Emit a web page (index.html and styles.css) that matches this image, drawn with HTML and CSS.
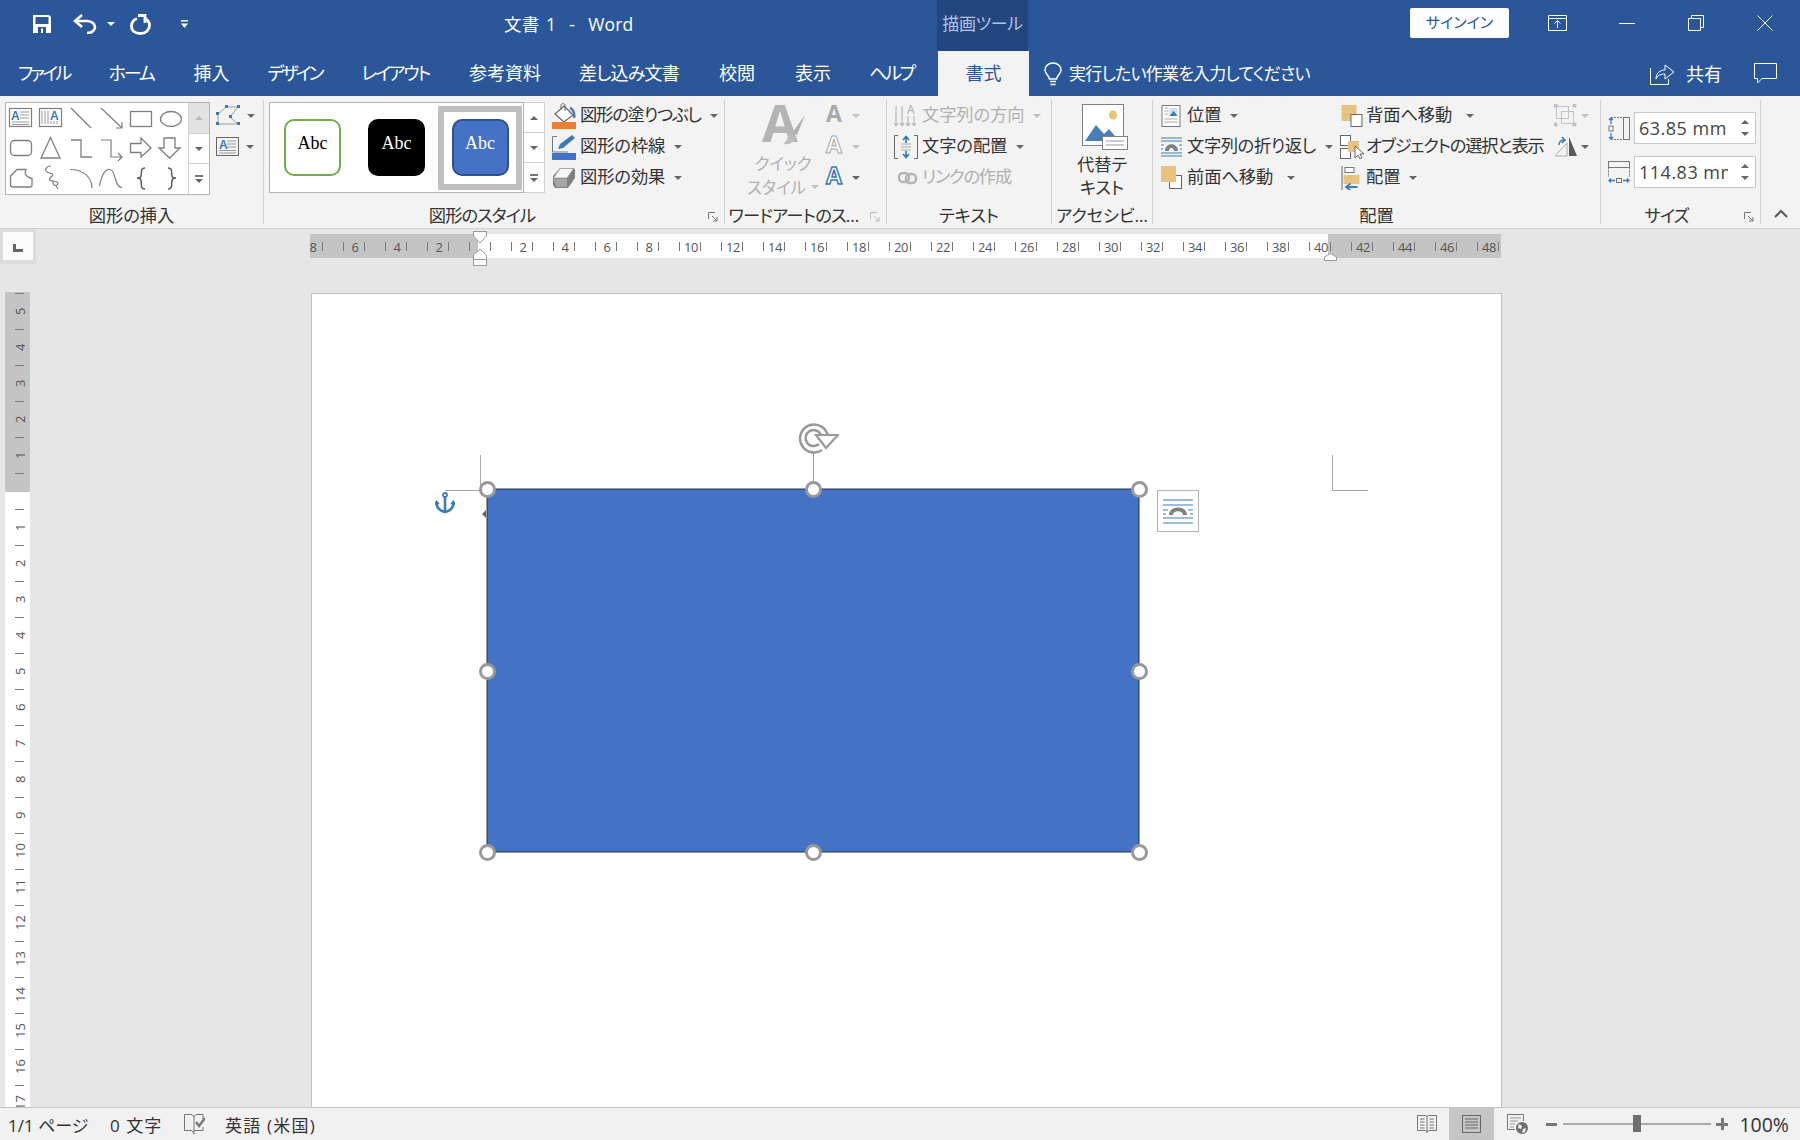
FILE: index.html
```html
<!DOCTYPE html>
<html lang="ja">
<head>
    <meta charset="UTF-8">
    <title>文書 1 - Word</title>
    <link rel="stylesheet" href="styles.css">
</head>
<body>
    <!-- title bar -->
    <header class="titlebar">
        <div class="qat">
            <svg class="qat-save" width="20" height="20" viewBox="0 0 20 20"><path d="M1 1H17L19 3V19H1Z" fill="#fff"/><rect x="3.500" y="3" width="13" height="7" fill="#2b579a"/><rect x="6" y="13" width="8" height="6" fill="#2b579a"/><rect x="9" y="14.500" width="2" height="4.500" fill="#fff"/></svg>
            <svg class="qat-undo" width="24" height="20" viewBox="0 0 24 20"><path d="M3 7H14C20 7 22 11 22 13C22 16 19 19 14 19" fill="none" stroke="#fff" stroke-width="2.600"/><path d="M9 1L2 7L9 13" fill="none" stroke="#fff" stroke-width="2.600"/></svg>
            <i class="caret caret-white qat-caret1"></i>
            <svg class="qat-redo" width="21" height="21" viewBox="0 0 21 21"><path d="M7 4.500C3 6 1.500 9 1.500 12C1.500 17 5.500 19.500 10.500 19.500C15.500 19.500 19.500 16 19.500 11.500C19.500 8 17.500 5.500 14 4" fill="none" stroke="#fff" stroke-width="2.800"/><path d="M15 0V9M8 1.500H15" fill="none" stroke="#fff" stroke-width="2.800"/></svg>
            <svg class="qat-more" width="9" height="9" viewBox="0 0 9 9"><rect x="1" width="7" height="1.500" fill="#fff"/><path d="M1 3.500H8L4.500 8Z" fill="#fff"/></svg>
        </div>
        <div class="doc-title">文書 1&nbsp;&nbsp;-&nbsp;&nbsp;Word</div>
        <div class="context-tab">描画ツール</div>
        <div class="signin">サインイン</div>
        <div class="winbtn"><svg width="19" height="16" viewBox="0 0 19 16"><path d="M.5.500H18.500V15.500H.5ZM.5 3.500H18.500M9.500 13V6M6.500 8.500L9.500 5.500L12.500 8.500" fill="none" stroke="#fff"/></svg></div>
        <div class="winbtn"><svg width="16" height="16" viewBox="0 0 16 16"><path d="M0 8.500H16" stroke="#fff"/></svg></div>
        <div class="winbtn"><svg width="16" height="16" viewBox="0 0 16 16"><path d="M.5 3.500H12.500V15.500H.5ZM3.500 3.500V.5H15.500V12.500H12.500" fill="none" stroke="#fff"/></svg></div>
        <div class="winbtn"><svg width="16" height="16" viewBox="0 0 16 16"><path d="M.5.500L15.500 15.500M15.500.500L.5 15.500" stroke="#fff"/></svg></div>
    </header>

    <!-- tabs -->
    <nav class="tabs">
        <span class="tab tab-kana tab-file">ファイル</span>
        <span class="tab tab-kana">ホーム</span>
        <span class="tab">挿入</span>
        <span class="tab tab-kana tab-design">デザイン</span>
        <span class="tab tab-kana">レイアウト</span>
        <span class="tab">参考資料</span>
        <span class="tab tab-mixed">差し込み文書</span>
        <span class="tab tab-wide">校閲</span>
        <span class="tab">表示</span>
        <span class="tab tab-kana">ヘルプ</span>
        <span class="tab-active">書式</span>
        <svg class="bulb" width="18" height="24" viewBox="0 0 18 24"><path d="M5.500 17C5 13 1 12 1 8C1 4 4.500 1 9 1C13.500 1 17 4 17 8C17 12 13 13 12.500 17Z" fill="none" stroke="#fff" stroke-width="1.500"/><path d="M6 19.500H12M6.500 22.500H11.500" stroke="#fff" stroke-width="1.500"/></svg>
        <span class="tell-me">実行したい作業を入力してください</span>
        <svg class="share-icon" width="25" height="23" viewBox="0 0 25 23"><path d="M.5 6V22.500H18.500V17" fill="none" stroke="#fff"/><path d="M6 17C6 11 10 8 15 8V3L24 10L15 17V12C11 12 8 13 6 17Z" fill="none" stroke="#fff"/></svg>
        <span class="share-text">共有</span>
        <svg class="comment-icon" width="23" height="21" viewBox="0 0 23 21"><path d="M.5.500H22.500V15.500H8L3.500 20V15.500H.5Z" fill="none" stroke="#fff"/></svg>
    </nav>

    <!-- ribbon -->
    <section class="ribbon">
        <div class="group g-insert">
            <div class="group-body">
                <div class="shape-gallery">
                    <svg class="shape-grid" width="182" height="91" viewBox="0 0 182 91" fill="none" stroke="#7f7f7f">
                        <rect x="3.500" y="5.500" width="22" height="18" stroke-width="1.200"/>
                        <text x="5" y="17" class="gal-a">A</text>
                        <path d="M14 9H23M14 12H23M14 15H23M6 19H23M6 21.500H23" stroke="#999"/>
                        <rect x="33.500" y="5.500" width="22" height="18" stroke-width="1.200"/>
                        <text x="44" y="17" class="gal-a">A</text>
                        <path d="M36 8V21M39 8V21M42 8V21M45 18V21M48 18V21M51 18V21" stroke="#999"/>
                        <path d="M65 5L85 25" stroke-width="1.200"/>
                        <path d="M95 5L116 25M116 19V25H110" stroke-width="1.200"/>
                        <rect x="124.500" y="8.500" width="21" height="15" stroke-width="1.300"/>
                        <ellipse cx="165" cy="16" rx="10.500" ry="7.500" stroke-width="1.300"/>
                        <rect x="4.500" y="37.500" width="21" height="15" rx="4" stroke-width="1.300"/>
                        <path d="M44.500 34.500L35 55H54Z" stroke-width="1.300"/>
                        <path d="M65 37H75V54H86" stroke-width="1.300"/>
                        <path d="M95 37H105V54H116M112 50L116 54L112 58" stroke-width="1.200"/>
                        <path d="M124.500 40.500H135V35L145 45L135 54V49.500H124.500Z" stroke-width="1.300"/>
                        <path d="M158 35H169V45H174L163.500 55L153 45H158Z" stroke-width="1.300"/>
                        <path d="M4.500 73L11 66.500H20C18 71 20 74 26 75.500V82Q26 84 24 84H7Q4.500 84 4.500 82Z" stroke-width="1.300"/>
                        <path d="M45 63C40 63 38 68 41 69C46 71 48 71 46 73C42 76 43 78 47 78C52 78 53 81 51 82C47 84 46 79 48 78M50 83L52 86" stroke-width="1.200"/>
                        <path d="M64 66.500C77 66.500 86 74 86 85" stroke-width="1.200"/>
                        <path d="M93.500 83C96 70 100 66 104 66.500C110 67 108 84 116 84.500" stroke-width="1.200"/>
                        <path d="M139 65C134 65 136 69 135 73C135 75 133 75 131 75C133 75 135 75 135 78C136 82 134 86 139 86" stroke="#555" stroke-width="1.400"/>
                        <path d="M162 65C167 65 165 69 166 73C166 75 168 75 170 75C168 75 166 75 166 78C165 82 167 86 162 86" stroke="#555" stroke-width="1.400"/>
                    </svg>
                    <div class="gal-scroll">
                        <span class="gal-btn gal-btn-off"><i class="tri-up tri-light"></i></span>
                        <span class="gal-btn"><i class="caret"></i></span>
                        <span class="gal-btn gal-more"><i class="more-bar"></i><i class="caret"></i></span>
                    </div>
                </div>
                <div class="shape-tools">
                    <div class="tool-row">
                        <svg width="25" height="21" viewBox="0 0 25 21" fill="none"><path d="M2 9V19H22L14 12L22 2H10Z" stroke="#999"/><path d="M0 7h3v3H0zM9 0h3v3H9zM21 0h3v3h-3zM13 10h3v3h-3zM21 17h3v3h-3zM0 17h3v3H0z" fill="#3e73b5"/></svg>
                        <i class="caret"></i>
                    </div>
                    <div class="tool-row">
                        <svg width="24" height="20" viewBox="0 0 24 20" fill="none"><rect x=".5" y=".5" width="22" height="18" stroke="#666"/><text x="3" y="12" class="gal-a">A</text><path d="M11 4H20M11 7H20M11 10H20M3 13.500H20M3 16H20" stroke="#999"/></svg>
                        <i class="caret"></i>
                    </div>
                </div>
            </div>
            <div class="group-label">図形の挿入</div>
        </div>

        <div class="group g-styles">
            <div class="group-body">
                <div class="style-gallery">
                    <div class="style-list">
                        <div class="style-cell"><span class="abc abc-green">Abc</span></div>
                        <div class="style-cell"><span class="abc abc-black">Abc</span></div>
                        <div class="style-cell style-cell-sel"><span class="abc abc-blue">Abc</span></div>
                    </div>
                    <div class="gal-scroll style-scroll">
                        <span class="gal-btn"><i class="tri-up"></i></span>
                        <span class="gal-btn"><i class="caret"></i></span>
                        <span class="gal-btn gal-more"><i class="more-bar"></i><i class="caret"></i></span>
                    </div>
                </div>
                <div class="commands cmd-fill">
                    <div class="cmd">
                        <svg class="cmd-icon" width="24" height="26" viewBox="0 0 24 26" fill="none"><path d="M12 3L21 12L12 19L3 11Z" fill="#fff" stroke="#666" stroke-width="1.200"/><path d="M9 7V2.500C9 0 13 0 13 2.500V8" stroke="#666"/><path d="M18 5C21 6 23 10 22 15" stroke="#4a7ebb" stroke-width="2.500"/><rect y="19" width="24" height="7" fill="#ed7d31"/></svg>
                        <span class="tight">図形の塗りつぶし</span><i class="caret"></i>
                    </div>
                    <div class="cmd">
                        <svg class="cmd-icon" width="24" height="26" viewBox="0 0 24 26" fill="none"><path d="M5 2.500H.5V18H16" stroke="#777"/><path d="M6 15L8 10L20 1L23 4L11 14Z" fill="#3e7ab8"/><rect y="19" width="24" height="7" fill="#4472c4"/></svg>
                        <span>図形の枠線</span><i class="caret"></i>
                    </div>
                    <div class="cmd">
                        <svg class="cmd-icon" width="24" height="24" viewBox="0 0 24 24"><path d="M8 2H22L23 4V12L16 22H3L1 19V10Z" fill="#7f7f7f"/><path d="M8 2.500H21.500L15 12H1.500Z" fill="#f7f7f7" stroke="#aaa"/><path d="M1.500 13H15V21H4Z" fill="#a6a6a6"/></svg>
                        <span>図形の効果</span><i class="caret"></i>
                    </div>
                </div>
            </div>
            <div class="group-label label-launch">図形のスタイル<svg class="launcher" width="10" height="10" viewBox="0 0 10 10"><path d="M.5 7V.5H7M4 4L9 9M9 5V9H5" fill="none" stroke="#777"/></svg></div>
        </div>

        <div class="group g-wordart">
            <div class="group-body">
                <div class="quick-style">
                    <svg width="44" height="43" viewBox="0 0 44 43"><text x="0" y="38" class="big-a">A</text><path d="M43 11L35 31L30 29Z" fill="#b0b0b0"/><path d="M28 30L33 33C33 38 28 41 21 40C25 38 25 33 28 30Z" fill="#bdbdbd"/></svg>
                    <div class="quick-text">クイック</div>
                    <div class="quick-text">スタイル<i class="caret caret-light"></i></div>
                </div>
                <div class="commands cmd-art">
                    <div class="cmd"><span class="art-a art-fill">A</span><i class="caret caret-light"></i></div>
                    <div class="cmd"><span class="art-a art-line">A</span><i class="caret caret-light"></i></div>
                    <div class="cmd"><span class="art-a art-blue">A</span><i class="caret"></i></div>
                </div>
            </div>
            <div class="group-label label-launch">ワードアートのス…<svg class="launcher launcher-off" width="10" height="10" viewBox="0 0 10 10"><path d="M.5 7V.5H7M4 4L9 9M9 5V9H5" fill="none" stroke="#bbb"/></svg></div>
        </div>

        <div class="group g-text">
            <div class="group-body">
                <div class="commands cmd-text">
                    <div class="cmd cmd-off">
                        <svg class="cmd-icon" width="24" height="24" viewBox="0 0 24 24" fill="none" stroke="#aaa"><path d="M2 2V21M8 2V21M14 12V21M20 12V21M0 19L2 22L4 19M6 19L8 22L10 19M12 19L14 22L16 19M18 19L20 22L22 19"/><text x="13" y="10" class="art-mini">A</text></svg>
                        <span>文字列の方向</span><i class="caret caret-light"></i>
                    </div>
                    <div class="cmd">
                        <svg class="cmd-icon" width="24" height="24" viewBox="0 0 24 24" fill="none"><path d="M4 .5H.5V23.500H4M20 .5H23.500V23.500H20" stroke="#666"/><path d="M7 9H17M7 12H17M7 15H17" stroke="#aaa"/><path d="M12 8V2M9 5L12 1.500L15 5M12 16V22M9 19L12 22.500L15 19" stroke="#2e75b6" stroke-width="1.600"/></svg>
                        <span>文字の配置</span><i class="caret"></i>
                    </div>
                    <div class="cmd cmd-off">
                        <svg class="cmd-icon link-icon" width="22" height="14" viewBox="0 0 22 14" fill="none" stroke="#b5b5b5" stroke-width="2.500"><rect x="2" y="2" width="10" height="9" rx="4"/><rect x="9" y="3" width="10" height="9" rx="4"/></svg>
                        <span class="tight">リンクの作成</span>
                    </div>
                </div>
            </div>
            <div class="group-label">テキスト</div>
        </div>

        <div class="group g-alt">
            <div class="group-body">
                <div class="alt-text">
                    <svg width="47" height="47" viewBox="0 0 47 47"><rect x=".5" y=".5" width="41" height="41" fill="#fff" stroke="#808080"/><ellipse cx="31" cy="11" rx="4" ry="4.500" fill="#e9c46a"/><path d="M3 37L14 21L22 30L27 25L37 37Z" fill="#4a7ebb"/><rect x="20.500" y="32.500" width="25" height="13" fill="#fff" stroke="#808080"/><path d="M24 37H42M24 41H42" stroke="#999"/></svg>
                    <div class="alt-line">代替テ</div>
                    <div class="alt-line">キスト</div>
                </div>
            </div>
            <div class="group-label">アクセシビ…</div>
        </div>

        <div class="group g-arrange">
            <div class="group-body">
                <div class="commands arr-col1">
                    <div class="cmd">
                        <svg class="cmd-icon" width="20" height="22" viewBox="0 0 20 22" fill="none"><rect x=".5" y=".5" width="18" height="21" fill="#fff" stroke="#777"/><path d="M3 3H7M3 6H7M3 9H7M3 14H16M3 17H16" stroke="#aaa"/><rect x="8" y="3" width="8" height="8" fill="#cfe0f2"/><path d="M8 11L12 6L16 11Z" fill="#3e7ab8"/></svg>
                        <span>位置</span><i class="caret"></i>
                    </div>
                    <div class="cmd">
                        <svg class="cmd-icon" width="21" height="20" viewBox="0 0 21 20" fill="none"><path d="M0 1H21M0 4H21M0 16H21M0 19H21" stroke="#3e7ab8" stroke-width="1.200"/><path d="M0 8H3M18 8H21M0 12H2M19 12H21" stroke="#3e7ab8"/><path d="M4 14C4 5 17 5 17 14H13C13 10 8 10 8 14Z" fill="#808080"/></svg>
                        <span class="tight-sm">文字列の折り返し</span><i class="caret"></i>
                    </div>
                    <div class="cmd">
                        <svg class="cmd-icon" width="21" height="23" viewBox="0 0 21 23" fill="none"><rect x="8.500" y="9.500" width="12" height="13" fill="#fff" stroke="#666"/><rect width="15" height="16" fill="#e8c27e"/></svg>
                        <span>前面へ移動</span><i class="caret caret-far"></i>
                    </div>
                </div>
                <div class="commands arr-col2">
                    <div class="cmd">
                        <svg class="cmd-icon" width="21" height="22" viewBox="0 0 21 22" fill="none"><rect width="15" height="16" fill="#e8c27e"/><rect x="9.500" y="9.500" width="11" height="12" fill="#fff" stroke="#666"/></svg>
                        <span>背面へ移動</span><i class="caret caret-far"></i>
                    </div>
                    <div class="cmd">
                        <svg class="cmd-icon" width="24" height="24" viewBox="0 0 24 24" fill="none"><rect x=".5" y=".5" width="10" height="10" fill="#fff" stroke="#666"/><rect x=".5" y="13.500" width="10" height="10" fill="#fff" stroke="#666"/><rect x="8" y="6" width="11" height="11" fill="#e8c27e"/><path d="M15 11V23L18 20L20 24L22 23L20 19H24Z" fill="#fff" stroke="#666"/></svg>
                        <span class="tight-md">オブジェクトの選択と表示</span>
                    </div>
                    <div class="cmd">
                        <svg class="cmd-icon" width="21" height="24" viewBox="0 0 21 24" fill="none"><path d="M.5 0V24" stroke="#666"/><rect x="3.500" y="1.500" width="9" height="5" fill="#fff" stroke="#777"/><rect x="2" y="9" width="16" height="9" fill="#e8c27e"/><path d="M16 21H5M9 17.500L4.500 21L9 24.500" stroke="#3e7ab8" stroke-width="1.800"/></svg>
                        <span>配置</span><i class="caret"></i>
                    </div>
                </div>
                <div class="commands arr-col3">
                    <div class="cmd">
                        <svg class="cmd-icon" width="23" height="23" viewBox="0 0 23 23" fill="none" stroke="#c4c0c8"><rect x="2.500" y="2.500" width="12" height="12"/><rect x="7.500" y="7.500" width="12" height="12"/><path d="M0 0h3v3H0zM19 0h3v3h-3zM0 19h3v3H0zM19 19h3v3h-3z" fill="#c4c0c8"/></svg>
                        <i class="caret caret-light"></i>
                    </div>
                    <div class="cmd">
                        <svg class="cmd-icon" width="23" height="21" viewBox="0 0 23 21" fill="none"><path d="M1 20L13 7V20Z" stroke="#aaa"/><path d="M15 1L23 20H15Z" fill="#595959"/><path d="M5 9C5 5 8 4 11 4M8 1L11 4L8 7" stroke="#3e7ab8" stroke-width="1.500"/></svg>
                        <i class="caret"></i>
                    </div>
                </div>
            </div>
            <div class="group-label">配置</div>
        </div>

        <div class="group g-size">
            <div class="group-body size-body">
                <div class="size-row">
                    <svg width="22" height="23" viewBox="0 0 22 23" fill="none"><path d="M3 .5H15.500M3 22.500H15.500M15.500.5V22.500" stroke="#777" stroke-dasharray="2 1"/><rect x="15.500" y=".5" width="6" height="22" stroke="#777"/><rect x="1" y="9" width="4" height="5" stroke="#777"/><path d="M3 7V1M1 3L3 1L5 3M3 16V22M1 20L3 22L5 20" stroke="#3e7ab8" stroke-width="1.300"/></svg>
                    <div class="spin-input"><span class="spin-value">63.85 mm</span><span class="spin-arrows"><i class="tri-up"></i><i class="caret"></i></span></div>
                </div>
                <div class="size-row">
                    <svg width="22" height="23" viewBox="0 0 22 23" fill="none"><rect x=".5" y=".5" width="21" height="6" stroke="#777"/><path d="M.5 6.500V16M21.500 6.500V16" stroke="#777" stroke-dasharray="2 1"/><rect x="8.500" y="17.500" width="5" height="4" stroke="#777"/><path d="M1 19.500H7M3 17.500L1 19.500L3 21.500M15 19.500H21M19 17.500L21 19.500L19 21.500" stroke="#3e7ab8" stroke-width="1.300"/></svg>
                    <div class="spin-input"><span class="spin-value">114.83 mm</span><span class="spin-arrows"><i class="tri-up"></i><i class="caret"></i></span></div>
                </div>
            </div>
            <div class="group-label label-launch label-size">サイズ<svg class="launcher" width="10" height="10" viewBox="0 0 10 10"><path d="M.5 7V.5H7M4 4L9 9M9 5V9H5" fill="none" stroke="#777"/></svg></div>
        </div>
        <svg class="collapse" width="14" height="9" viewBox="0 0 14 9"><path d="M1 8L7 2L13 8" fill="none" stroke="#595959" stroke-width="2"/></svg>
    </section>

    <!-- document area -->
    <main class="workspace">
        <div class="left-col">
            <div class="tab-stop"><span class="tab-stop-inner"><i class="tab-stop-glyph"></i></span></div>
            <div class="vruler">
                <span>5</span><span>4</span><span>3</span><span>2</span><span>1</span><span></span>
                <span>1</span><span>2</span><span>3</span><span>4</span><span>5</span><span>6</span><span>7</span><span>8</span><span>9</span>
                <span>10</span><span>11</span><span>12</span><span>13</span><span>14</span><span>15</span><span>16</span><span>17</span>
            </div>
        </div>
        <div class="doc-col">
            <div class="hruler">
                <div class="hruler-labels">
                    <span>8</span><span>6</span><span>4</span><span>2</span><span></span><span>2</span><span>4</span><span>6</span><span>8</span>
                    <span>10</span><span>12</span><span>14</span><span>16</span><span>18</span><span>20</span><span>22</span><span>24</span><span>26</span><span>28</span>
                    <span>30</span><span>32</span><span>34</span><span>36</span><span>38</span><span>40</span><span>42</span><span>44</span><span>46</span><span>48</span>
                </div>
                <svg class="indent-marker" width="14" height="35" viewBox="0 0 14 35"><path d="M.5.500H13.500V5L7 12L.5 5Z" fill="#fff" stroke="#999"/><path d="M7 18L13.500 24V34.500H.5V24ZM.5 28.500H13.500" fill="#fff" stroke="#999"/></svg>
                <svg class="right-marker" width="13" height="8" viewBox="0 0 13 8"><path d="M.5 7.500V4L6.500.5L12.500 4V7.500Z" fill="#fff" stroke="#999"/></svg>
            </div>
            <div class="page">
                <i class="crop crop-left"></i>
                <i class="crop crop-right"></i>
                <svg class="anchor" width="20" height="22" viewBox="0 0 20 22" fill="none" stroke="#3e7ab8"><circle cx="10" cy="3" r="2" stroke-width="1.800"/><path d="M10 5V20" stroke-width="2.600"/><path d="M1.500 10C1.500 16 5 19 10 20C15 19 18.500 16 18.500 10" stroke-width="2.600"/><path d="M0 13L1.500 9L4 12M20 13L18.500 9L16 12" stroke-width="1.200"/></svg>
                <div class="shape">
                    <i class="shape-arrow"></i>
                    <i class="rot-line"></i>
                    <svg class="rot-handle" width="44" height="32" viewBox="0 0 44 32" fill="none" stroke="#999" stroke-width="2.500"><path d="M27 27A14 14 0 1 1 33 14"/><path d="M24 21A8 8 0 1 1 26 12"/><path d="M21 12H43L31 25Z" fill="#fff" stroke-width="2.200"/></svg>
                    <i class="handle h-tl"></i><i class="handle h-tc"></i><i class="handle h-tr"></i>
                    <i class="handle h-ml"></i><i class="handle h-mr"></i>
                    <i class="handle h-bl"></i><i class="handle h-bc"></i><i class="handle h-br"></i>
                    <div class="layout-btn">
                        <svg width="30" height="25" viewBox="0 0 30 25" fill="none"><path d="M0 1H30M0 6H30M0 19H30M0 24H30" stroke="#3e7ab8"/><path d="M0 11H5M25 11H30M0 15H3M27 15H30" stroke="#3e7ab8"/><path d="M6 16C6 6 24 6 24 16H20C20 11 10 11 10 16Z" fill="#808080"/></svg>
                    </div>
                </div>
            </div>
        </div>
    </main>

    <!-- status bar -->
    <footer class="statusbar">
        <span class="st-pages">1/1 ページ</span>
        <span class="st-words">0 文字</span>
        <svg class="st-proof" width="21" height="21" viewBox="0 0 21 21" fill="none"><path d="M8 .5H.5V16.500H8L10 20V3ZM10 3C10 1.500 12 .5 13 .5H19V5M19 13V16.500H10" stroke="#777"/><path d="M12 8L15 12L21 4" stroke="#777" stroke-width="2.400"/></svg>
        <span class="st-lang">英語 (米国)</span>
        <div class="st-right">
            <svg class="st-view" width="20" height="20" viewBox="0 0 20 20" fill="none" stroke="#777"><path d="M.5 1.500H8C9 1.500 10 2 10 3C10 2 11 1.500 12 1.500H19.500V16.500H12C11 16.500 10 17 10 18.500C10 17 9 16.500 8 16.500H.5ZM10 3V18.500M3 5H7.500M3 8H7.500M3 11H7.500M3 14H7.500M12.500 5H17M12.500 8H17M12.500 11H17M12.500 14H17"/></svg>
            <div class="st-print"><svg width="19" height="18" viewBox="0 0 19 18" fill="none" stroke="#666"><rect x=".5" y=".5" width="18" height="17"/><path d="M3 4H16M3 7H16M3 10H16M3 13H16"/></svg></div>
            <svg class="st-web" width="21" height="20" viewBox="0 0 21 20" fill="none"><path d="M.5 11V.5H16.500V7M.5.500V15.500H8" stroke="#777"/><path d="M3 4H14M3 7H11M3 10H8M3 13H7" stroke="#999"/><circle cx="15" cy="14" r="6" fill="#6e6e6e"/><path d="M12 10L15 12L14 15L11 14ZM16 15L19 14L18 18L15 19Z" fill="#f1f1f1"/></svg>
            <i class="zoom-minus"></i>
            <div class="zoom-track"><i class="zoom-thumb"></i></div>
            <i class="zoom-plus"></i>
            <span class="st-zoom">100%</span>
        </div>
    </footer>
</body>
</html>
```

FILE: styles.css
```css
* {
    box-sizing: border-box;
}
body {
    display: flex;
    flex-direction: column;
    width: 1800px;
    height: 1140px;
    margin: 0;
    overflow: hidden;
    background-color: #e6e6e6;
    color: #333;
    font-family: "Open Sans", "Noto Sans CJK JP", sans-serif;
    font-feature-settings: "palt";
    font-size: 17px;
}
i {
    display: block;
}
svg {
    display: block;
    flex-shrink: 0;
}

/* title bar */
.titlebar {
    display: flex;
    height: 51px;
    background-color: #2b579a;
    color: #fff;
}
.qat {
    display: flex;
    align-items: center;
    width: 504px;
    padding: 0 0 3px 32px;
}
.qat-undo {
    margin-left: 21px;
}
.qat-caret1 {
    margin-left: 10px;
}
.qat-redo {
    margin-left: 15px;
}
.qat-more {
    margin-left: 29px;
}
.doc-title {
    width: 433px;
    line-height: 48px;
    font-size: 17.500px;
    letter-spacing: .2px;
    word-spacing: 1.800px;
}
.context-tab {
    width: 91px;
    background-color: #234680;
    color: #b4c3dc;
    line-height: 48px;
    text-align: center;
    font-size: 17px;
    letter-spacing: -.4px;
}
.signin {
    width: 99px;
    height: 30px;
    margin: 8px 0 0 auto;
    background-color: #fff;
    border-radius: 2px;
    color: #2b579a;
    line-height: 29px;
    text-align: center;
    font-size: 15px;
}
.winbtn {
    display: flex;
    justify-content: center;
    width: 69px;
    padding-top: 15px;
}
.signin + .winbtn {
    margin-left: 14px;
}
.titlebar .winbtn:last-child {
    margin-right: 1px;
}

/* tabs */
.tabs {
    display: flex;
    align-items: center;
    height: 45px;
    padding-left: 18px;
    background-color: #2b579a;
    color: #fff;
    font-size: 18px;
}
.tab {
    margin: -3px 38px 0 0;
    white-space: nowrap;
}
.tab-kana {
    margin-right: 40px;
    letter-spacing: -2.200px;
}
.tab-file {
    margin-right: 39px;
    letter-spacing: -2.700px;
}
.tab-design {
    letter-spacing: -3px;
}
.tab-mixed {
    margin-right: 40px;
    letter-spacing: -.8px;
}
.tab-wide {
    margin-right: 40px;
}
.tab-active {
    display: flex;
    align-items: center;
    justify-content: center;
    width: 91px;
    height: 45px;
    padding-bottom: 3px;
    margin-left: -16px;
    background-color: #f3f3f3;
    color: #2b579a;
}
.bulb {
    margin-left: 15px;
}
.tell-me {
    margin: -3px 0 0 7px;
    font-size: 17px;
    letter-spacing: -.8px;
    white-space: nowrap;
}
.share-icon {
    margin-left: auto;
}
.share-text {
    margin: -2px 0 0 11px;
}
.comment-icon {
    margin: 0 23px 0 32px;
}

/* ribbon */
.ribbon {
    position: relative;
    display: flex;
    height: 133px;
    padding-top: 4px;
    background-color: #f3f3f3;
    border-bottom: 1px solid #d0d0d0;
    font-size: 17.300px;
    letter-spacing: -.1px;
}
.group {
    display: flex;
    flex-direction: column;
    height: 124px;
    border-right: 1px solid #d2d2d2;
}
.group-body {
    display: flex;
    height: 100px;
}
.group-label {
    position: relative;
    height: 24px;
    line-height: 32px;
    text-align: center;
    font-size: 17.300px;
    white-space: nowrap;
}
.label-launch {
    padding-right: 24px;
    letter-spacing: -1px;
}
.label-size {
    padding-right: 28px;
}
.launcher {
    position: absolute;
    right: 6px;
    top: 12px;
}
.g-insert {
    width: 264px;
    padding-left: 5px;
}
.g-styles {
    width: 461px;
    padding-left: 5px;
}
.g-insert .group-label,
.g-styles .group-label {
    margin-left: -5px;
}
.g-wordart {
    width: 162px;
}
.g-wordart .group-label {
    letter-spacing: -.8px;
}
.g-text {
    width: 165px;
}
.g-alt {
    width: 101px;
}
.g-arrange {
    width: 448px;
}
.g-size {
    width: 160px;
}
.collapse {
    position: absolute;
    right: 12px;
    top: 113px;
}

/* carets and small arrows */
.caret {
    width: 0;
    height: 0;
    border-style: solid;
    border-width: 4px 4px 0;
    border-color: #666 transparent transparent;
    flex-shrink: 0;
}
.caret-white {
    border-top-color: #fff;
}
.caret-light {
    border-top-color: #c0c0c0;
}
.tri-up {
    width: 0;
    height: 0;
    border-style: solid;
    border-width: 0 4px 4px;
    border-color: transparent transparent #666;
}
.tri-light {
    border-bottom-color: #bbb;
}

/* shape gallery */
.shape-gallery {
    display: flex;
    width: 205px;
    height: 93px;
    margin-top: 2px;
    background-color: #fff;
    border: 1px solid #b4b4b4;
}
.shape-grid {
    width: 182px;
}
.gal-a {
    fill: #3e7ab8;
    stroke: none;
    font-size: 12px;
    font-weight: 700;
    font-family: "Liberation Sans", sans-serif;
}
.gal-scroll {
    display: flex;
    flex-direction: column;
    flex: 1;
    border-left: 1px solid #d0d0d0;
}
.gal-btn {
    display: flex;
    flex-direction: column;
    align-items: center;
    justify-content: center;
    flex: 1;
    background-color: #fff;
    border-bottom: 1px solid #d0d0d0;
}
.gal-btn:last-child {
    border-bottom: none;
}
.gal-btn-off {
    background-color: #e2e2e2;
}
.more-bar {
    width: 8px;
    height: 2px;
    margin-bottom: 2px;
    background-color: #777;
}
.shape-tools {
    margin-left: 6px;
}
.tool-row {
    display: flex;
    align-items: center;
    height: 31px;
    gap: 6px;
}

/* style gallery */
.style-gallery {
    display: flex;
    height: 91px;
    margin-top: 2px;
}
.style-list {
    display: flex;
    align-items: center;
    width: 255px;
    padding-left: 14px;
    background-color: #fff;
    border: 1px solid #b4b4b4;
}
.style-cell {
    display: flex;
    align-items: center;
    justify-content: center;
    width: 84px;
    height: 84px;
}
.style-cell:first-child {
    width: 57px;
    margin-right: 27px;
}
.style-cell:nth-child(2) {
    width: 57px;
    margin-right: 13px;
}
.style-cell-sel {
    border: 6px solid #c0c0c0;
}
.abc {
    display: block;
    width: 57px;
    height: 57px;
    padding-top: 12px;
    border-radius: 10px;
    text-align: center;
    font-family: "Liberation Serif", serif;
    font-size: 18px;
    letter-spacing: 0;
}
.abc-green {
    background-color: #fff;
    border: 2px solid #70ad47;
    color: #000;
}
.abc-black {
    background-color: #000;
    border: 2px solid #000;
    color: #fff;
}
.abc-blue {
    background-color: #4472c4;
    border: 2px solid #2f528f;
    color: #fff;
}
.style-scroll {
    flex: none;
    width: 21px;
    border: 1px solid #d0d0d0;
    border-left: none;
}

/* command rows */
.commands {
    display: flex;
    flex-direction: column;
}
.cmd {
    display: flex;
    align-items: center;
    height: 31px;
    white-space: nowrap;
}
.cmd > span {
    margin-top: -5px;
}
.cmd .caret {
    margin-left: 9px;
}
.cmd .caret-far {
    margin-left: 14px;
}
.cmd-icon {
    margin-right: 4px;
}
.link-icon {
    margin: 0 3px 0 3px;
}
.cmd-off {
    color: #b0b0b0;
}
.cmd-fill {
    margin-left: 7px;
}
.tight {
    letter-spacing: -1.200px;
}
.tight-sm {
    letter-spacing: -.4px;
}
.tight-md {
    letter-spacing: -1.200px;
}

/* wordart group */
.quick-style {
    width: 101px;
    padding: 4px 0 0 37px;
    color: #b0b0b0;
}
.big-a {
    fill: #b4b4b4;
    font-family: "Open Sans", sans-serif;
    font-weight: 700;
    font-size: 52px;
}
.quick-text {
    display: flex;
    align-items: center;
    justify-content: center;
    width: 70px;
    height: 21px;
    margin: 3px 0 0 -14px;
    font-size: 16.500px;
    white-space: nowrap;
}
.quick-text:first-of-type {
    margin-top: 5px;
}
.quick-text .caret {
    margin-left: 5px;
}
.cmd > .art-a {
    width: 16px;
    margin-top: -4px;
    font-family: "Open Sans", sans-serif;
    font-size: 23px;
    font-weight: 700;
    line-height: 1;
    text-align: center;
}
.art-fill {
    color: #aaa;
}
.art-line {
    color: #fff;
    -webkit-text-stroke: 1px #aaa;
}
.art-blue {
    color: #fff;
    -webkit-text-stroke: 1.500px #3e7ab8;
}
.cmd-art .caret {
    margin-left: 10px;
}

/* text group */
.cmd-text {
    margin-left: 7px;
}
.art-mini {
    fill: #aaa;
    stroke: none;
    font-family: "Open Sans", sans-serif;
    font-size: 12px;
}

/* alt text */
.alt-text {
    display: flex;
    flex-direction: column;
    align-items: center;
    width: 100%;
    padding: 4px 0 0 6px;
}
.alt-line {
    height: 23px;
    line-height: 23px;
    margin-left: -6px;
}
.alt-line:first-of-type {
    margin-top: 2px;
}

/* arrange */
.arr-col1 {
    width: 179px;
    margin-left: 8px;
}
.arr-col2 {
    width: 214px;
}
.arr-col1 .cmd-icon {
    width: 21px;
    margin-right: 5px;
}
.arr-col2 .cmd-icon {
    width: 24px;
    margin-right: 2px;
}
.arr-col3 .cmd .caret {
    margin-left: 0;
}

/* size */
.size-body {
    flex-direction: column;
    padding: 12px 0 0 7px;
    gap: 12px;
}
.size-row {
    display: flex;
    align-items: center;
    gap: 4px;
}
.spin-input {
    display: flex;
    align-items: center;
    justify-content: space-between;
    width: 122px;
    height: 32px;
    padding: 0 6px 0 4px;
    background-color: #fff;
    border: 1px solid #c8c8c8;
    color: #444;
    font-size: 18px;
    letter-spacing: .5px;
}
.spin-value {
    width: 89px;
    overflow: hidden;
    white-space: nowrap;
}
.spin-arrows {
    display: flex;
    flex-direction: column;
    gap: 8px;
}

/* document area */
.workspace {
    display: flex;
    flex: 1;
    min-height: 0;
}
.left-col {
    display: flex;
    flex-direction: column;
    width: 36px;
}
.tab-stop {
    width: 36px;
    height: 35px;
    padding: 3px 3px 4px;
    background-color: #dcdcdc;
}
.tab-stop-inner {
    position: relative;
    display: block;
    height: 100%;
    background-color: #fbfbfb;
}
.tab-stop-glyph {
    position: absolute;
    left: 10px;
    top: 12px;
    width: 10px;
    height: 8px;
    border-left: 3px solid #666;
    border-bottom: 3px solid #666;
}
.vruler {
    display: flex;
    flex-direction: column;
    flex: 1;
    min-height: 0;
    width: 25px;
    margin: 28px 0 0 5px;
    padding-top: 1px;
    overflow: hidden;
    background:
        linear-gradient(#777 1px, transparent 1px) 10px 1px / 9px 36px repeat-y,
        linear-gradient(#c4c4c4 200px, #fff 200px);
    color: #555;
    font-size: 13px;
}
.vruler span {
    display: flex;
    align-items: center;
    justify-content: center;
    flex: 0 0 36px;
    padding: 0 5px 0 0;
    writing-mode: vertical-rl;
    transform: rotate(180deg);
}
.doc-col {
    display: flex;
    flex-direction: column;
    flex: 1;
    min-width: 0;
    margin-left: 274px;
    padding-right: 299px;
}
.hruler {
    position: relative;
    flex: 0 0 24px;
    margin-top: 5px;
    background:
        linear-gradient(90deg, #777 1px, transparent 1px) 12px 8px / 21px 9px repeat-x,
        linear-gradient(90deg, #c4c4c4 168px, #fff 168px, #fff 1018px, #c4c4c4 1018px);
}
.hruler-labels {
    display: flex;
    height: 24px;
    overflow: hidden;
    color: #555;
    font-size: 13px;
    line-height: 26px;
    letter-spacing: -.4px;
}
.hruler-labels span {
    flex: 0 0 42px;
    text-align: center;
}
.hruler-labels span:first-child {
    margin-left: -18px;
}
.indent-marker {
    position: absolute;
    left: 163px;
    top: -3px;
}
.right-marker {
    position: absolute;
    left: 1014px;
    top: 19px;
}

/* page and shape */
.page {
    position: relative;
    flex: 1;
    width: 1191px;
    margin: 35px 0 0 1px;
    background-color: #fff;
    border: 1px solid #c0c0c0;
    border-bottom: none;
    overflow: hidden;
}
.crop {
    position: absolute;
    width: 36px;
    height: 36px;
    top: 161px;
    border-bottom: 1px solid #aaa;
}
.crop-left {
    left: 133px;
    border-right: 1px solid #aaa;
}
.crop-right {
    left: 1020px;
    border-left: 1px solid #aaa;
}
.anchor {
    position: absolute;
    left: 123px;
    top: 198px;
}
.shape {
    position: absolute;
    left: 175px;
    top: 195px;
    width: 652px;
    height: 363px;
    background-color: #4472c4;
    border: 1px solid #2f528f;
    outline: 1px solid #9a9a9a;
}
.shape-arrow {
    position: absolute;
    left: -6px;
    top: 20px;
    border-style: solid;
    border-width: 4px 4px 4px 0;
    border-color: transparent #666 transparent transparent;
}
.rot-line {
    position: absolute;
    left: 325px;
    top: -37px;
    width: 1px;
    height: 37px;
    background-color: #999;
}
.rot-handle {
    position: absolute;
    left: 307px;
    top: -67px;
}
.handle {
    position: absolute;
    width: 17px;
    height: 17px;
    background-color: #fff;
    border: 3px solid #999;
    border-radius: 50%;
}
.h-tl, .h-tc, .h-tr {
    top: -9.500px;
}
.h-ml, .h-mr {
    top: 173px;
}
.h-bl, .h-bc, .h-br {
    bottom: -9.500px;
}
.h-tl, .h-ml, .h-bl {
    left: -9.500px;
}
.h-tc, .h-bc {
    left: 317px;
}
.h-tr, .h-mr, .h-br {
    right: -9.500px;
}
.layout-btn {
    position: absolute;
    left: 669px;
    top: 0;
    display: flex;
    align-items: center;
    justify-content: center;
    width: 42px;
    height: 42px;
    background-color: #fff;
    border: 1px solid #b4b4b4;
}

/* status bar */
.statusbar {
    display: flex;
    align-items: center;
    height: 33px;
    padding-left: 8px;
    background-color: #f1f1f1;
    border-top: 1px solid #c6c6c6;
    font-size: 17px;
    white-space: nowrap;
}
.st-pages {
    width: 102px;
}
.st-words {
    width: 74px;
    letter-spacing: 1px;
}
.st-proof {
    margin-right: 20px;
}
.st-lang {
    letter-spacing: 1.200px;
}
.st-right {
    display: flex;
    align-items: center;
    align-self: stretch;
    margin-left: auto;
    padding-right: 11px;
}
.st-view {
    margin-right: 12px;
}
.st-print {
    display: flex;
    align-items: center;
    justify-content: center;
    width: 45px;
    background-color: #c5c5c5;
    align-self: stretch;
}
.st-web {
    margin: 0 18px 0 13px;
}
.zoom-minus {
    width: 11px;
    height: 3px;
    background-color: #777;
}
.zoom-track {
    position: relative;
    width: 148px;
    height: 2px;
    margin: 0 5px 0 6px;
    background-color: #aaa;
}
.zoom-thumb {
    position: absolute;
    left: 70px;
    top: -8px;
    width: 8px;
    height: 17px;
    background-color: #6e6e6e;
}
.zoom-plus {
    width: 12px;
    height: 12px;
    background:
        linear-gradient(#777, #777) center / 12px 3px no-repeat,
        linear-gradient(#777, #777) center / 3px 12px no-repeat;
}
.st-zoom {
    margin-left: 11px;
    font-size: 19.500px;
}
```
